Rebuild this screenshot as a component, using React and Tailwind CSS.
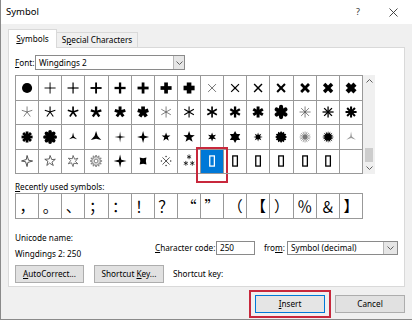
import React from 'react';

const pt = (cx, cy, a, r) => [cx + r * Math.cos((a * Math.PI) / 180), cy + r * Math.sin((a * Math.PI) / 180)];

// n arms drawn from the centre
const spokes = (n, w, { r = 6, rot = -90, c = '#000', cap = 'butt', cx = 12, cy = 12 } = {}) => (
  <g stroke={c} strokeWidth={w} strokeLinecap={cap}>
    {Array.from({ length: n }, (_, i) => {
      const [x, y] = pt(cx, cy, rot + (i * 360) / n, r);
      return <line key={i} x1={cx} y1={cy} x2={x} y2={y} />;
    })}
    <circle cx={cx} cy={cy} r={w / 2} fill={c} stroke="none" />
  </g>
);

const star = (n, R, r, { rot = -90, fill = '#000', stroke = 'none', sw = 0, twist = 0 } = {}) => {
  const p = [];
  for (let i = 0; i < 2 * n; i++) {
    const a = rot + (i * 180) / n + (i % 2 ? twist : 0);
    const [x, y] = pt(12, 12, a, i % 2 ? r : R);
    p.push(`${x.toFixed(2)},${y.toFixed(2)}`);
  }
  return <polygon points={p.join(' ')} fill={fill} stroke={stroke} strokeWidth={sw} />;
};

const box = (c = '#000') => <rect x="9.5" y="6.5" width="5" height="11" fill="none" stroke={c} strokeWidth="1.4" />;

const rows = [
  [
    <circle cx="12" cy="12" r="5.5" fill="#000" />,
    spokes(4, 1), spokes(4, 1.3), spokes(4, 2), spokes(4, 2.5), spokes(4, 3), spokes(4, 4), spokes(4, 5),
    spokes(4, 0.8, { rot: -45, c: '#444' }), spokes(4, 1.2, { rot: -45 }), spokes(4, 1.6, { rot: -45 }),
    spokes(4, 2.2, { rot: -45 }), spokes(4, 3, { rot: -45 }), spokes(4, 3.8, { rot: -45 }), spokes(4, 4.8, { rot: -45 }),
  ],
  [
    spokes(5, 0.8, { c: '#555' }), spokes(5, 1.2), spokes(5, 1.8), spokes(5, 2.5), spokes(5, 3.2), spokes(5, 4),
    spokes(6, 0.8, { c: '#555' }), spokes(6, 1.2), spokes(6, 1.8), spokes(6, 2.5), spokes(6, 3.2), spokes(6, 4.5, { r: 5.5, cap: 'round' }),
    spokes(8, 0.8, { rot: 0, c: '#555' }), spokes(8, 1.4, { rot: 0 }), spokes(8, 2.2, { rot: 0 }),
  ],
  [
    spokes(8, 3, { rot: 0 }), spokes(8, 4, { rot: 0, cap: 'round', r: 5.5 }),
    star(3, 5, 1.1), star(3, 6.5, 2), star(4, 6, 1), star(4, 6.5, 2), star(5, 5, 2), star(5, 6.5, 2.6),
    star(6, 5, 2.2), star(6, 6.5, 3.6), star(8, 5, 2.3), star(12, 6.5, 4.8),
    <g>{spokes(16, 0.7, { c: '#777' })}<circle cx="12" cy="12" r="2.6" fill="#777" /></g>,
    star(16, 6.5, 3.6),
    star(3, 6, 1, { fill: '#999' }),
  ],
  [
    star(4, 6, 1.8, { fill: '#fff', stroke: '#333', sw: 0.9, twist: 18 }),
    star(5, 6, 2.4, { fill: '#fff', stroke: '#444', sw: 0.9, twist: 14 }),
    star(6, 6, 2.6, { fill: '#fff', stroke: '#555', sw: 0.9, twist: 12 }),
    <g>{star(12, 6.5, 4, { fill: '#ddd', stroke: '#666', sw: 0.8 })}<circle cx="12" cy="12" r="2" fill="#fff" stroke="#666" strokeWidth="0.8" /></g>,
    star(4, 7, 1.9),
    star(4, 5.2, 3, { rot: -45 }),
    <g>
      {spokes(4, 0.9, { rot: -45, r: 5.5, c: '#333' })}
      {[0, 90, 180, 270].map((a) => {
        const [x, y] = pt(12, 12, a, 5);
        return <circle key={a} cx={x} cy={y} r="0.8" fill="#333" />;
      })}
    </g>,
    <g>
      {spokes(6, 0.8, { r: 2.6, cx: 12, cy: 7.5 })}
      {spokes(6, 0.8, { r: 2.6, cx: 8.5, cy: 14.5 })}
      {spokes(6, 0.8, { r: 2.6, cx: 15.5, cy: 14.5 })}
    </g>,
    box('#fff'), box(), box(), box(), box(), box(), null,
  ],
];

const recent = ['，', '。', '、', '；', '：', '！', '？', '“', '”', '（', '【', '）', '％', '＆', '】'];

const Chevron = ({ up }) => (
  <svg width="7" height="4" viewBox="0 0 7 4">
    <polyline points={up ? '0.5,3.5 3.5,0.5 6.5,3.5' : '0.5,0.5 3.5,3.5 6.5,0.5'} fill="none" stroke="#606060" strokeWidth="1" />
  </svg>
);

const U = ({ children }) => <span className="underline underline-offset-[1px]">{children}</span>;

export default function App() {
  return (
    <div className="relative w-[412px] h-[320px] overflow-hidden bg-[#f0f0f0] border-l border-b border-[#8a8a8a] font-['Noto_Sans',sans-serif] text-[8.2px] leading-[12px] text-black whitespace-nowrap">
      {/* title bar */}
      <div className="h-[24px] bg-white flex items-center pl-[5px]">
        <span className="text-[9.5px]">Symbol</span>
        <span className="ml-auto text-[9px] text-[#333]">?</span>
        <svg className="ml-[29px] mr-[14px]" width="9" height="9" viewBox="0 0 9 9">
          <path d="M0.5 0.5 L8.5 8.5 M8.5 0.5 L0.5 8.5" stroke="#333" strokeWidth="0.9" />
        </svg>
      </div>

      <div className="pl-[7px] pt-[5px]">
        {/* tabs */}
        <div className="flex items-end h-[18px]">
          <div className="relative z-10 -mb-px w-[49px] h-[19px] bg-white border border-b-0 border-[#d9d9d9] flex items-center justify-center">
            <U>S</U>ymbols
          </div>
          <div className="w-[81px] h-[15px] border-t border-r border-[#d9d9d9] flex items-center justify-center">
            S<U>p</U>ecial Characters
          </div>
        </div>

        {/* panel */}
        <div className="w-[397px] h-[240px] bg-white border border-[#d9d9d9] pl-[6px] pt-[7px]">
          <div className="flex items-center h-[15px]">
            <span className="w-[20px]"><U>F</U>ont:</span>
            <div className="w-[150px] h-[15px] border border-[#8a8a8a] flex items-center">
              <span className="pl-[3px] flex-1">Wingdings 2</span>
              <div className="w-[11px] h-full bg-[#e6e6e6] border-l border-[#b5b5b5] flex items-center justify-center">
                <Chevron />
              </div>
            </div>
          </div>

          <div className="flex mt-[5px]">
            <div className="w-[348px] grid grid-cols-[repeat(15,minmax(0,1fr))] border-l border-t border-[#999]">
              {rows.flat().map((g, i) => (
                <div
                  key={i}
                  className={`relative h-[24.5px] border-r border-b border-[#999] flex items-center justify-center ${i === 53 ? 'bg-[#0078d7]' : ''}`}
                >
                  {g && (
                    <svg width="24" height="24" viewBox="0 0 24 24">
                      {g}
                    </svg>
                  )}
                  {i === 53 && <div className="absolute -left-[5px] -top-[3px] w-[32px] h-[36px] border-2 border-[#c8283c]" />}
                </div>
              ))}
            </div>
            <div className="w-[12px] h-[99px] bg-[#f0f0f0] flex flex-col">
              <div className="h-[12px] flex items-center justify-center">
                <Chevron up />
              </div>
              <div className="h-[61px]" />
              <div className="h-[14px] mx-[2px] bg-[#cdcdcd]" />
              <div className="flex-1 flex items-center justify-center">
                <Chevron />
              </div>
            </div>
          </div>

          <div className="h-[19px] flex items-end">
            <span><U>R</U>ecently used symbols:</span>
          </div>
          <div className="w-[348px] h-[26px] grid grid-cols-[repeat(15,minmax(0,1fr))] border-l border-t border-b border-[#999] font-['Noto_Sans_CJK_SC',sans-serif] text-[15px] leading-[24px]">
            {recent.map((c, i) => (
              <div key={i} className="border-r border-[#999] flex items-center justify-center">
                {c}
              </div>
            ))}
          </div>

          <div className="flex mt-[13px]">
            <div className="w-[140px]">
              <div>Unicode name:</div>
              <div className="mt-[3.5px]">Wingdings 2: 250</div>
            </div>
            <div className="flex items-center mt-[9px] h-[14px]">
              <span className="w-[61px]"><U>C</U>haracter code:</span>
              <div className="w-[39px] h-[14px] border border-[#8a8a8a] pl-[3px] flex items-center">250</div>
              <span className="ml-[9px] w-[23px]">fro<U>m</U>:</span>
              <div className="w-[111px] h-[14px] border border-[#8a8a8a] flex items-center">
                <span className="pl-[3px] flex-1">Symbol (decimal)</span>
                <div className="w-[14px] h-full bg-[#e6e6e6] border-l border-[#b5b5b5] flex items-center justify-center">
                  <Chevron />
                </div>
              </div>
            </div>
          </div>

          <div className="flex items-center mt-[5px]">
            <div className="w-[69px] h-[18px] bg-[#e1e1e1] border border-[#adadad] flex items-center justify-center">
              <U>A</U>utoCorrect...
            </div>
            <div className="ml-[10px] w-[70px] h-[18px] bg-[#e1e1e1] border border-[#adadad] flex items-center justify-center">
              Shortcut&nbsp;<U>K</U>ey...
            </div>
            <span className="ml-[9px]">Shortcut key:</span>
          </div>
        </div>
      </div>

      {/* bottom buttons */}
      <div className="flex justify-end items-start pr-[7px] mt-[3px]">
        <div className="border-2 border-[#c8283c] px-[4px] py-[3px]">
          <div className="w-[70px] h-[18px] bg-[#e5e5e5] border border-[#0078d7] flex items-center justify-center">
            <U>I</U>nsert
          </div>
        </div>
        <div className="ml-[4px] mt-[5px] w-[70px] h-[18px] bg-[#e1e1e1] border border-[#adadad] flex items-center justify-center">
          Cancel
        </div>
      </div>
    </div>
  );
}
